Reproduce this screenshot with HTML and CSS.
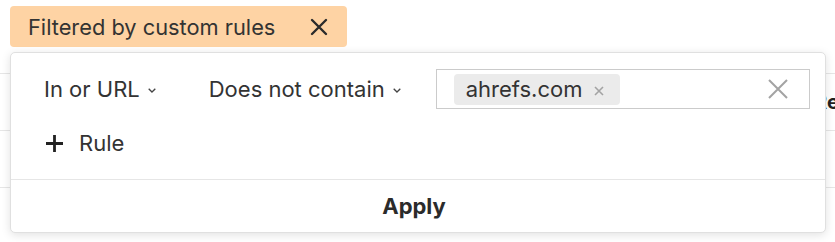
FILE: index.html
```html
<!DOCTYPE html>
<html lang="en">
<head>
    <meta charset="UTF-8" />
    <title>Custom rules filter</title>
    <link rel="stylesheet" href="styles.css">
</head>
<body>

<div class="page">

    <!-- Table behind the popover -->
    <div class="table">
        <div class="row row-head"><span class="col-title">Re</span></div>
        <div class="row"></div>
        <div class="row"><span class="sort-mark"></span></div>
    </div>

    <!-- Active filter tag -->
    <div class="filter-tag">
        <span>Filtered by custom rules</span>
        <svg class="tag-close" width="18" height="18" viewBox="0 0 18 18">
            <path d="M2 2 L16 16 M16 2 L2 16" stroke="#2b2b2b" stroke-width="2.4" stroke-linecap="round"/>
        </svg>
    </div>

    <!-- Rules popover -->
    <div class="popover">
        <div class="rules">
            <div class="rule">
                <button class="select select-field">In or URL
                    <svg class="caret" width="8" height="5" viewBox="0 0 8 5"><path d="M0.7 0.7 L4 4 L7.3 0.7" fill="none" stroke="#444" stroke-width="1.3"/></svg>
                </button>
                <button class="select select-op">Does not contain
                    <svg class="caret" width="8" height="5" viewBox="0 0 8 5"><path d="M0.7 0.7 L4 4 L7.3 0.7" fill="none" stroke="#444" stroke-width="1.3"/></svg>
                </button>
                <div class="value-box">
                    <span class="chip">ahrefs.com
                        <svg class="chip-x" width="10" height="10" viewBox="0 0 10 10"><path d="M1 1 L9 9 M9 1 L1 9" stroke="#a3a3a3" stroke-width="1.6"/></svg>
                    </span>
                    <svg class="clear" width="20" height="20" viewBox="0 0 20 20">
                        <path d="M1 1 L19 19 M19 1 L1 19" stroke="#a3a3a3" stroke-width="2"/>
                    </svg>
                </div>
            </div>
            <button class="add-rule">
                <svg width="19" height="19" viewBox="0 0 19 19">
                    <path d="M9.5 1 V18 M1 9.5 H18" stroke="#222" stroke-width="2.8"/>
                </svg>
                Rule
            </button>
        </div>
        <div class="footer">
            <button class="apply">Apply</button>
        </div>
    </div>

</div>

</body>
</html>
```

FILE: styles.css
```css
* {
  box-sizing: border-box;
  margin: 0;
  padding: 0;
  font-family: 'Inter', 'Noto Sans', sans-serif;
}

body {
  background: #fff;
  color: #333;
  width: 835px;
  height: 242px;
  overflow: hidden;
}

.page {
  position: relative;
  height: 242px;
  padding: 6px 0 0 10px;
}

.table {
  position: absolute;
  left: 0;
  right: 0;
  top: 73px;
}

.row {
  height: 57px;
  border-top: 1px solid #e6e6e6;
  position: relative;
}

.col-title {
  position: absolute;
  left: 814px;
  top: 16px;
  font-weight: 700;
  font-size: 20px;
  color: #222;
  white-space: nowrap;
}

.sort-mark {
  position: absolute;
  left: 0;
  top: 54px;
  width: 0;
  height: 0;
  border-left: 4.5px solid transparent;
  border-right: 4.5px solid transparent;
  border-top: 7px solid #1a7f3c;
}

.filter-tag {
  position: relative;
  display: inline-flex;
  align-items: center;
  gap: 35px;
  height: 41px;
  padding: 0 19px 0 18px;
  background: #fed3a4;
  border-radius: 4px;
  font-size: 21.8px;
  color: #333;
}

.tag-close {
  display: block;
}

.popover {
  position: absolute;
  left: 10px;
  top: 52px;
  width: 816px;
  height: 181px;
  background: #fff;
  border: 1px solid #e0e0e0;
  border-radius: 5px;
  box-shadow: 0 2px 10px rgba(0, 0, 0, 0.12);
  display: flex;
  flex-direction: column;
}

.rules {
  flex: 1;
  padding: 16px 15px 0 33px;
}

button {
  background: none;
  border: none;
  font-size: 22px;
  color: #333;
  cursor: pointer;
}

.rule {
  display: flex;
  align-items: center;
  height: 40px;
}

.select {
  display: inline-flex;
  align-items: center;
  gap: 8px;
}

.select-op {
  margin-left: 53px;
}

.caret {
  display: block;
  margin-top: 2px;
}

.value-box {
  margin-left: 35px;
  width: 374px;
  height: 40px;
  border: 1px solid #cbcbcb;
  display: flex;
  align-items: center;
  justify-content: space-between;
  padding: 0 21px 0 17px;
}

.chip {
  display: inline-flex;
  align-items: center;
  gap: 11px;
  height: 31px;
  padding: 0 16px 0 12px;
  background: #ebebeb;
  border-radius: 4px;
  font-size: 22px;
  color: #333;
}

.chip-x {
  display: block;
  margin-top: 3px;
}

.clear {
  display: block;
}

.add-rule {
  display: inline-flex;
  align-items: center;
  gap: 15px;
  margin-top: 21px;
  padding-left: 1px;
}

.footer {
  height: 53px;
  border-top: 1px solid #e6e6e6;
  display: flex;
  align-items: center;
  justify-content: center;
  padding-right: 8px;
}

.apply {
  font-weight: 700;
  font-size: 22px;
  color: #2b2b2b;
}
```
